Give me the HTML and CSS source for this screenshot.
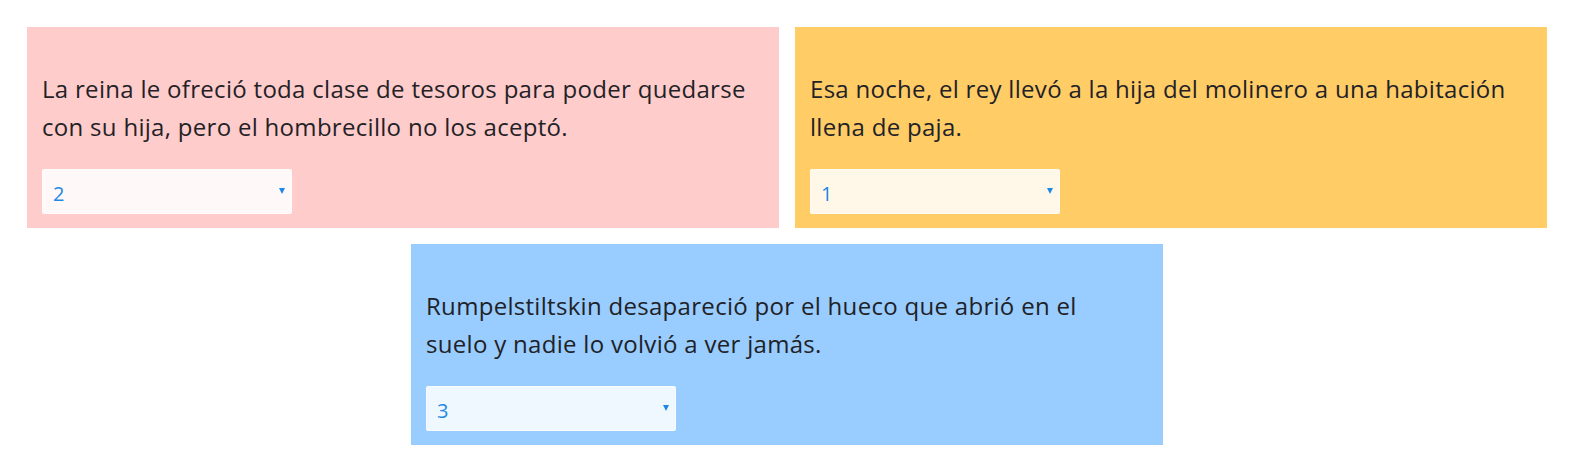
FILE: index.html
```html
<!DOCTYPE html>
<html lang="es">
<head>
<meta charset="utf-8">
<title>Cuento</title>
<link rel="stylesheet" href="styles.css">
</head>
<body>
<div class="wrap">
  <div class="card pink">
    <p class="text">La reina le ofreció toda clase de tesoros para poder quedarse con su hija, pero el hombrecillo no los aceptó.</p>
    <div class="select"><span class="val">2</span><span class="arrow"></span></div>
  </div>
  <div class="card orange">
    <p class="text">Esa noche, el rey llevó a la hija del molinero a una habitación llena de paja.</p>
    <div class="select"><span class="val">1</span><span class="arrow"></span></div>
  </div>
  <div class="card blue">
    <p class="text">Rumpelstiltskin desapareció por el hueco que abrió en el suelo y nadie lo volvió a ver jamás.</p>
    <div class="select"><span class="val">3</span><span class="arrow"></span></div>
  </div>
</div>
</body>
</html>
```
FILE: styles.css
```css
html, body {
  margin: 0;
  background: #ffffff;
}
.wrap {
  padding: 27px 26px 27px 27px;
  display: flex;
  flex-wrap: wrap;
  justify-content: center;
  gap: 16px;
}
.card {
  width: 752px;
  height: 201px;
  box-sizing: border-box;
  padding: 0 30px 14px 15px;
  display: flex;
  flex-direction: column;
}
.pink { background: #ffcccc; }
.orange { background: #ffcc66; }
.blue { background: #99ccff; }
.text {
  margin: 43px 0 0 0;
  font-family: "Open Sans", "Noto Sans", sans-serif;
  font-size: 24px;
  letter-spacing: 0.3px;
  line-height: 37.5px;
  color: #1f2226;
}
.select {
  margin-top: auto;
  width: 250px;
  height: 45px;
  box-sizing: border-box;
  background: rgba(255, 255, 255, 0.85);
  border: 1px solid rgba(255, 255, 255, 0.6);
  border-radius: 2px;
  display: flex;
  align-items: center;
  justify-content: space-between;
  padding: 0 6px 0 10px;
}
.val {
  font-family: "Open Sans", "Noto Sans", sans-serif;
  font-size: 20px;
  color: #1e88e5;
  padding-top: 4px;
}
.arrow {
  width: 0;
  height: 0;
  border-left: 3px solid transparent;
  border-right: 3px solid transparent;
  border-top: 6px solid #1e88e5;
  margin-bottom: 2px;
}
```
